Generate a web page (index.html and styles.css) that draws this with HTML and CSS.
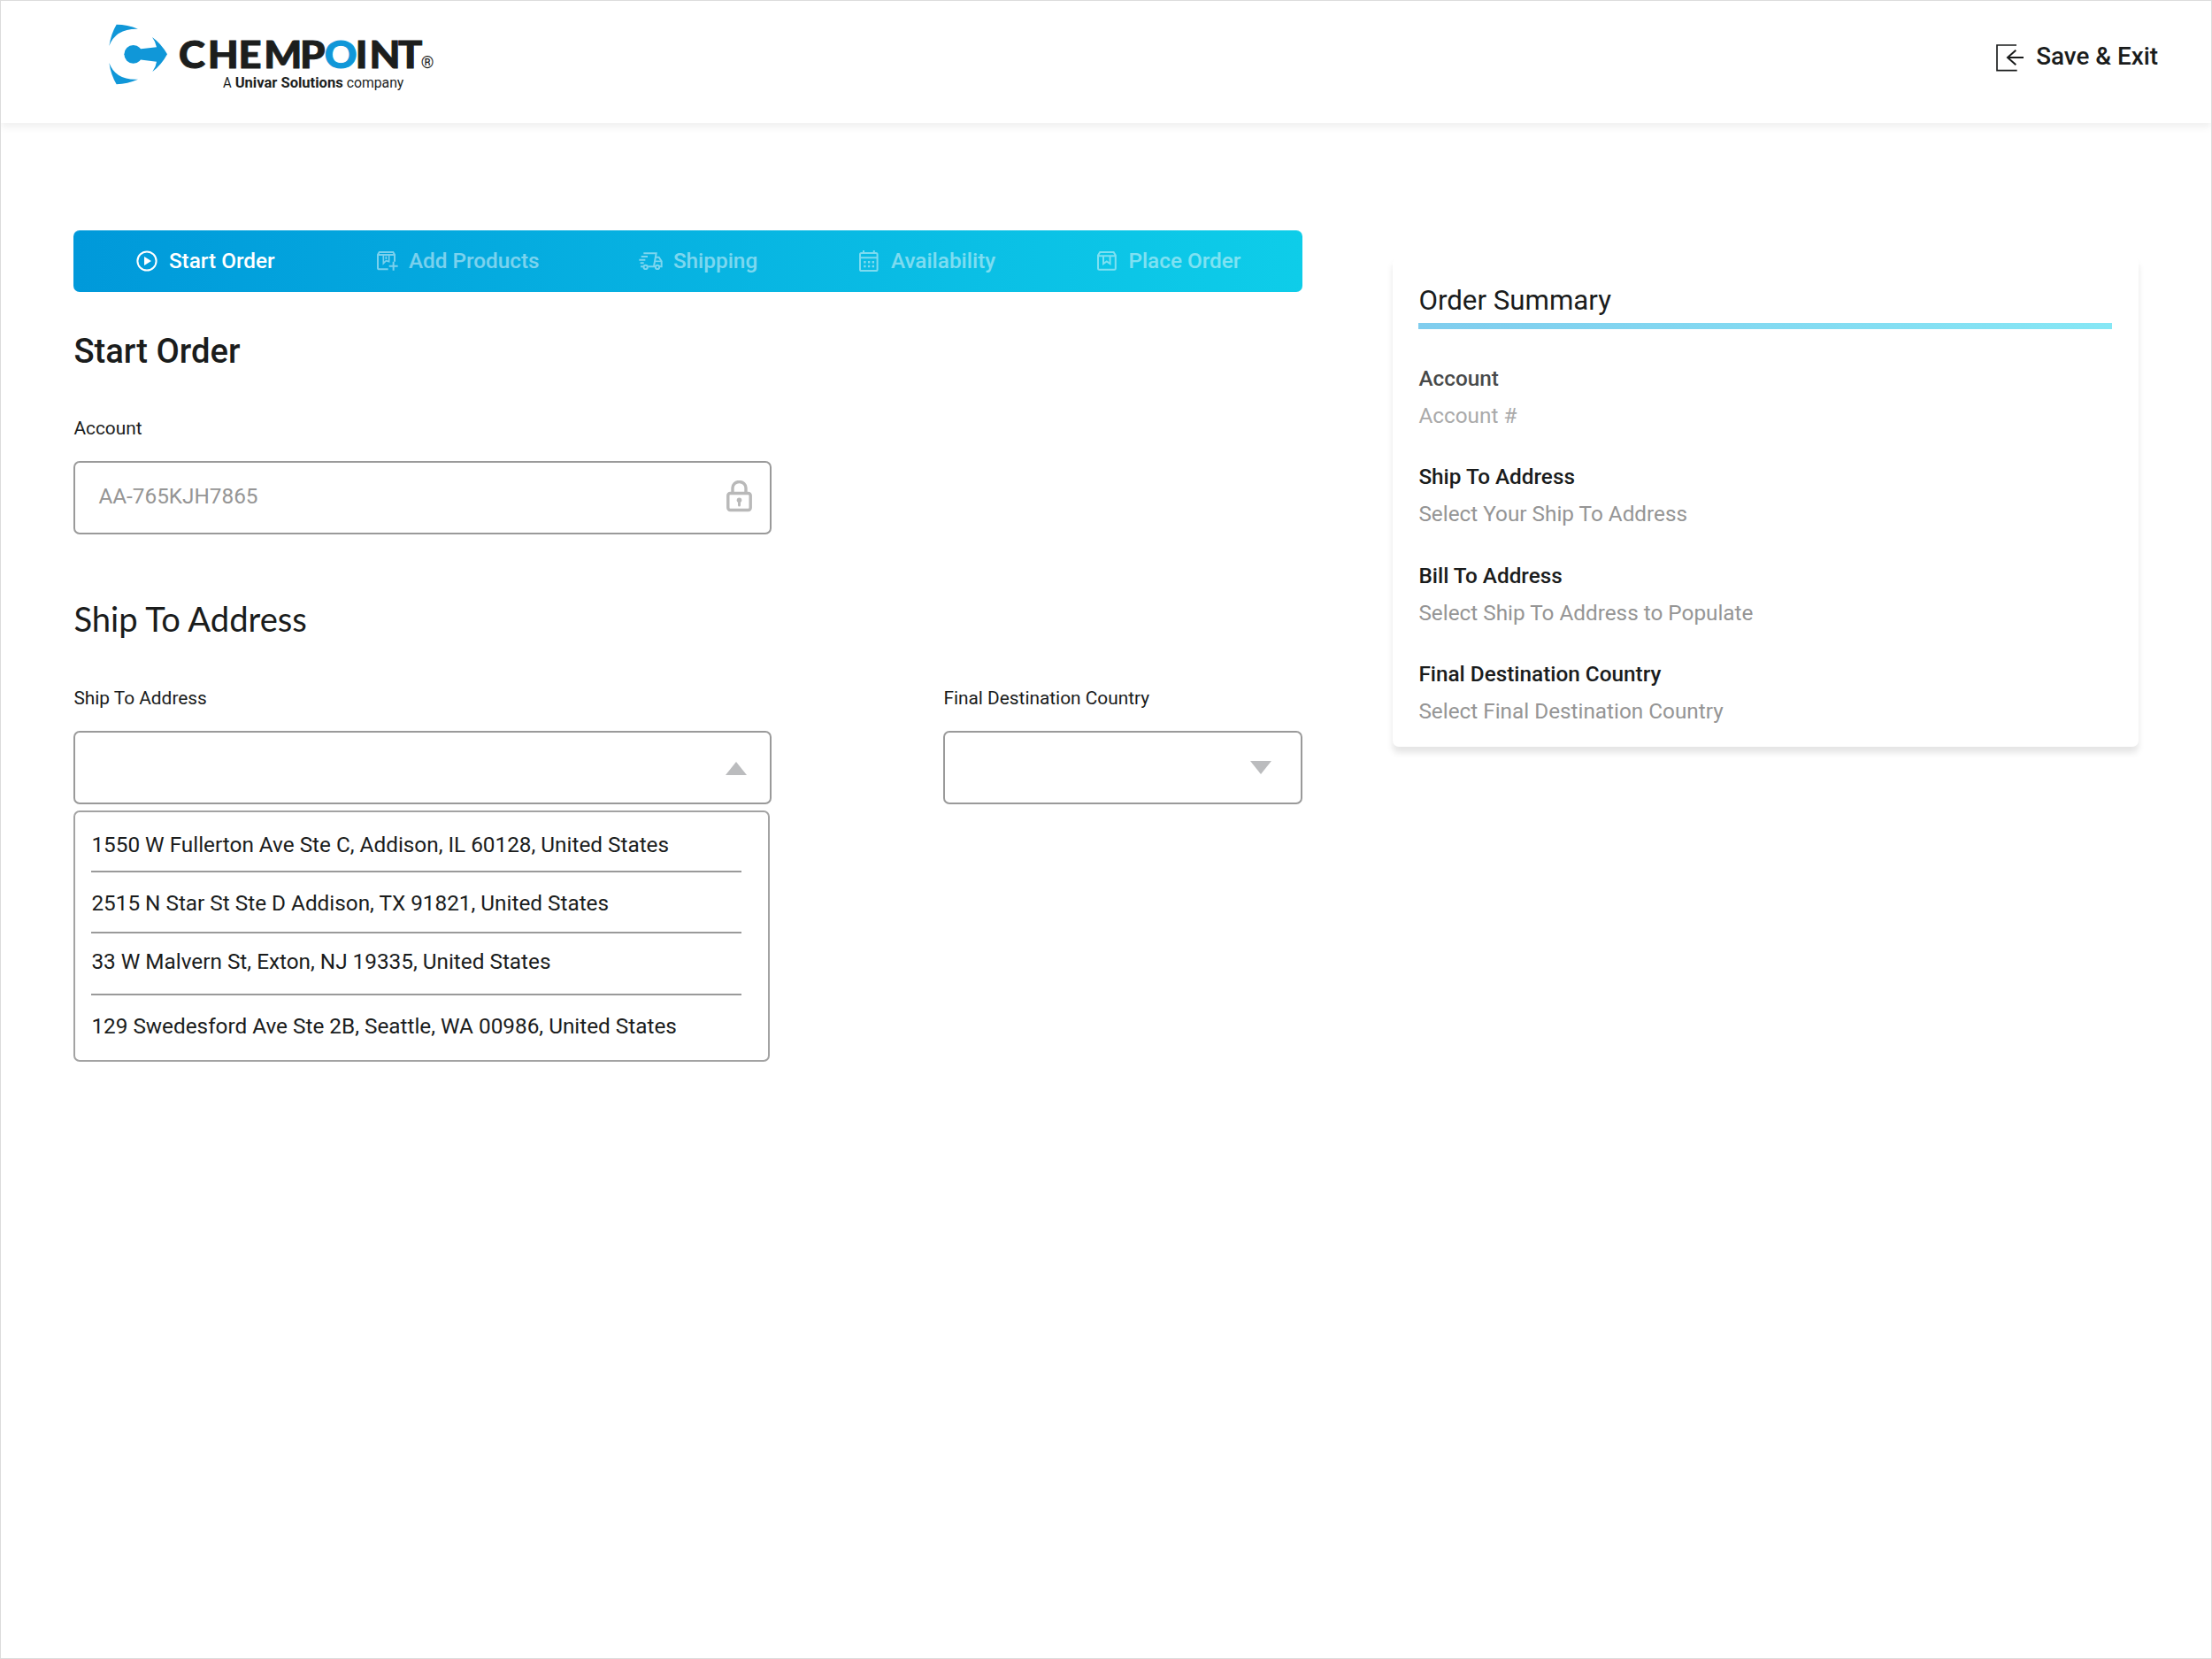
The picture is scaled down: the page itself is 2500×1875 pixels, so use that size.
FILE: index.html
```html
<!DOCTYPE html>
<html lang="en">
<head>
    <meta charset="UTF-8">
    <meta name="viewport" content="width=device-width, initial-scale=1.0">
    <title>ChemPoint - Start Order</title>
    <link rel="stylesheet" href="styles.css">
</head>
<body>
    <header class="header">
        <svg class="logo" viewBox="60 45 1140 240">
            <g fill="#1097d8">
                <path d="M95 53Q132 53 168 68Q92 66 70 126Q76 85 95 53Z"/>
                <path d="M95 256Q132 254 168 239Q92 243 70 183Q76 224 95 256Z"/>
                <circle cx="152" cy="154" r="31"/>
                <path d="M165 137L231 130Q228 112 216 96Q247 118 267 154Q247 191 217 213Q229 196 231 179L165 171Z"/>
            </g>
            <g transform="scale(1.07 1)">
                <text class="logo-name" y="200" x="286 378 475 556 670">CHEMP</text>
                <text class="logo-name logo-o" y="200" x="748">O</text>
                <text class="logo-name" y="200" x="846 890 981">INT</text>
            </g>
            <text class="logo-reg" y="201" x="1127">®</text>
            <text class="logo-tag" y="267" x="456" textLength="29" lengthAdjust="spacingAndGlyphs">A</text>
            <text class="logo-tag logo-bold" y="267" x="497" textLength="366" lengthAdjust="spacingAndGlyphs">Univar Solutions</text>
            <text class="logo-tag" y="267" x="875" textLength="194" lengthAdjust="spacingAndGlyphs">company</text>
        </svg>
        <a class="exit">
            <svg class="exit-icon" viewBox="108 89 93 93" fill="none" stroke="#1a1c1c" stroke-width="5">
                <path d="M177 92H111V178H179"/>
                <path d="M201 134H147M175 109L147 134L175 159" stroke-width="6"/>
            </svg>
            <span>Save &amp; Exit</span>
        </a>
    </header>

    <main class="page">
        <section class="order">
            <nav class="steps">
                <div class="step active">
                    <svg width="24" height="24" viewBox="0 0 24 24">
                        <circle cx="12" cy="12" r="10.6" fill="none" stroke="#fff" stroke-width="2"/>
                        <path d="M9 7L17 12L9 17Z" fill="#fff"/>
                    </svg>
                    <span>Start Order</span>
                </div>
                <div class="step">
                    <svg width="24" height="22" viewBox="34 45 72 66" fill="none" stroke="#fff" stroke-width="6">
                        <path d="M72 106H42Q37 106 37 101V56L42 48H89L94 56V80M37 57H94"/>
                        <path d="M56 58V86L65 77L75 80V58M65 62V72" stroke-width="5"/>
                        <path d="M90 80V110M75 95H105"/>
                    </svg>
                    <span>Add Products</span>
                </div>
                <div class="step">
                    <svg width="27" height="20" viewBox="20 46 81 60" fill="none" stroke="#fff" stroke-width="6">
                        <path d="M36 50H79L71 94M28 61H50M21 72H42M25 83H37M26 95H36M51 95H74"/>
                        <path d="M77 63H88L97 77V95H91"/>
                        <path d="M77 77H97" stroke-width="5"/>
                        <circle cx="43" cy="97" r="6.5"/>
                        <circle cx="83" cy="97" r="6.5"/>
                    </svg>
                    <span>Shipping</span>
                </div>
                <div class="step">
                    <svg width="22" height="24" viewBox="0 0 22 24" fill="none" stroke="#fff" stroke-width="2">
                        <rect x="1" y="3" width="19.6" height="20" rx="1.6"/>
                        <path d="M1 8.2H20.6M5 0V4M16.8 0V4"/>
                        <path d="M5.2 13.2H17M5.2 18H17" stroke-width="2.4" stroke-dasharray="2.4 2.3"/>
                    </svg>
                    <span>Availability</span>
                </div>
                <div class="step">
                    <svg width="22" height="22" viewBox="0 0 22 22" fill="none" stroke="#fff" stroke-width="2">
                        <path d="M1 4.5L3.2 1H18.6L20.8 4.5V19.4Q20.8 20.8 19.4 20.8H2.4Q1 20.8 1 19.4ZM1 5.2H20.8"/>
                        <path d="M7 5.5V14L10.8 11.4L14.6 14V5.5"/>
                    </svg>
                    <span>Place Order</span>
                </div>
            </nav>

            <h1 class="title">Start Order</h1>

            <label class="label">Account</label>
            <div class="field field-account">
                <span class="field-value">AA-765KJH7865</span>
                <svg width="29" height="36" viewBox="0 0 29 36" fill="none" stroke="#b9b9b9" stroke-width="3.4">
                    <rect x="1.8" y="14.5" width="25.4" height="19" rx="2.5"/>
                    <path d="M7 14V8.5A7.5 7 0 0 1 22 8.5V14"/>
                    <path d="M14.5 23V28" stroke-width="3" stroke-linecap="round"/>
                    <circle cx="14.5" cy="22.3" r="2.8" fill="#b9b9b9" stroke="none"/>
                </svg>
            </div>

            <h2 class="subtitle">Ship To Address</h2>

            <div class="row">
                <div class="col-address">
                    <label class="label">Ship To Address</label>
                    <div class="field field-ship">
                        <svg width="24" height="15" viewBox="0 0 24 15"><path d="M12 0L24 15H0Z" fill="#bbbcbe"/></svg>
                    </div>
                    <ul class="menu">
                        <li>1550 W Fullerton Ave Ste C, Addison, IL 60128, United States</li>
                        <li>2515 N Star St Ste D Addison, TX 91821, United States</li>
                        <li>33 W Malvern St, Exton, NJ 19335, United States</li>
                        <li>129 Swedesford Ave Ste 2B, Seattle, WA 00986, United States</li>
                    </ul>
                </div>
                <div class="col-country">
                    <label class="label">Final Destination Country</label>
                    <div class="field field-country">
                        <svg width="24" height="15" viewBox="0 0 24 15"><path d="M0 0H24L12 15Z" fill="#bbbcbe"/></svg>
                    </div>
                </div>
            </div>
        </section>

        <aside class="summary">
            <h3 class="summary-title">Order Summary</h3>
            <div class="summary-bar"></div>
            <dl class="summary-list">
                <div class="faded">
                    <dt>Account</dt>
                    <dd>Account #</dd>
                </div>
                <div>
                    <dt>Ship To Address</dt>
                    <dd>Select Your Ship To Address</dd>
                </div>
                <div>
                    <dt>Bill To Address</dt>
                    <dd>Select Ship To Address to Populate</dd>
                </div>
                <div>
                    <dt>Final Destination Country</dt>
                    <dd>Select Final Destination Country</dd>
                </div>
            </dl>
        </aside>
    </main>
</body>
</html>
```

FILE: styles.css
```css
* {
    box-sizing: border-box;
    margin: 0;
    padding: 0;
}
body {
    height: 1875px;
    border: 1px solid #dcdcdc;
    background-color: #fff;
    font-family: Roboto, sans-serif;
    font-size: 24.32px;
    line-height: 30px;
    color: #1a1c1c;
    overflow: hidden;
}

/* Header */
.header {
    display: flex;
    justify-content: space-between;
    align-items: flex-start;
    height: 138px;
    padding: 24px 60px 0 119px;
    background-color: #fff;
    box-shadow: 0 5px 8px rgba(0, 0, 0, 0.06);
}
.logo {
    width: 380px;
    height: 80px;
}
.logo-name {
    font: 900 127px Lato, sans-serif;
    fill: #1c1e1d;
    stroke: #1c1e1d;
    stroke-width: 3;
}
.logo-o {
    fill: #1097d8;
    stroke: #1097d8;
}
.logo-reg {
    font: 400 56px Roboto, sans-serif;
    fill: #1c1e1d;
}
.logo-tag {
    font: 400 49px Roboto, sans-serif;
    fill: #1c1e1d;
}
.logo-bold {
    font-weight: 700;
}
.exit {
    display: flex;
    align-items: center;
    gap: 14.5px;
    padding-top: 21px;
    font-size: 27.8px;
    font-weight: 500;
}
.exit-icon {
    width: 31px;
    height: 31px;
    margin-top: 4px;
}

/* Page columns */
.page {
    display: flex;
    align-items: flex-start;
    gap: 102px;
    padding: 121px 0 0 82.4px;
}
.order {
    width: 1389px;
}

/* Steps bar */
.steps {
    display: grid;
    grid-template-columns: 272px 296px 249px 268.5px auto;
    align-items: center;
    height: 70px;
    padding: 0 0 1px 71px;
    border-top: 1px solid rgba(255, 255, 255, 0.35);
    border-radius: 7px;
    background: linear-gradient(90deg, #0099da, #0ecde9) border-box;
    color: #fff;
    font-weight: 500;
}
.step {
    display: flex;
    align-items: center;
    gap: 11.5px;
    opacity: 0.47;
}
.step:nth-child(4),
.step:nth-child(5) {
    gap: 13.5px;
}
.step.active {
    gap: 12.5px;
    opacity: 1;
}

/* Form */
.title {
    margin-top: 44px;
    font-size: 38.2px;
    font-weight: 500;
    line-height: 46px;
}
.subtitle {
    margin: 72px 0 54px;
    font-family: Lato, sans-serif;
    font-size: 38.2px;
    font-weight: 400;
    line-height: 46px;
}
.label {
    display: block;
    font-size: 20.85px;
    line-height: 26px;
}
.title + .label {
    margin-top: 51px;
}
.row {
    display: flex;
    justify-content: space-between;
}
.col-address {
    width: 789px;
}
.col-country {
    width: 406px;
}
.field {
    display: flex;
    justify-content: flex-end;
    align-items: center;
    height: 83px;
    margin-top: 24px;
    border: 2px solid #9a9a9a;
    border-radius: 7px;
    background-color: #fff;
}
.field-account {
    justify-content: space-between;
    width: 789px;
    padding: 0 20px 3px 26px;
}
.field-value {
    color: #959595;
}
.field-ship {
    padding: 1px 26px 0 0;
}
.field-country {
    padding-right: 33px;
}
.menu {
    width: 787px;
    height: 284px;
    margin-top: 7px;
    padding: 0 30px 0 18px;
    border: 2px solid #a3a3a3;
    border-radius: 7px;
    background-color: #fff;
    list-style: none;
}
.menu li {
    padding: 22px 0 14px;
    border-bottom: 2px solid #9a9a9a;
}
.menu li:nth-child(2) {
    padding: 20px 0 17px;
}
.menu li:nth-child(3) {
    padding: 17px 0 21px;
}
.menu li:nth-child(4) {
    padding: 20px 0 0;
    border-bottom: none;
}

/* Order summary */
.summary {
    width: 843px;
    height: 554px;
    margin-top: 30px;
    padding: 31px 30px 0 29px;
    border-radius: 7px;
    background-color: #fff;
    box-shadow: 0 7px 7px rgba(0, 0, 0, 0.1);
}
.summary-title {
    font-size: 31.25px;
    font-weight: 400;
    line-height: 38px;
}
.summary-bar {
    height: 7px;
    margin: 6px 0 41px;
    background: linear-gradient(90deg, #80cdee, #86e7f5);
}
.summary-list {
    display: flex;
    flex-direction: column;
    gap: 39.4px;
}
.summary dt {
    font-weight: 500;
}
.summary dd {
    margin-top: 12px;
    color: #959595;
}
.summary .faded {
    opacity: 0.8;
}
```
